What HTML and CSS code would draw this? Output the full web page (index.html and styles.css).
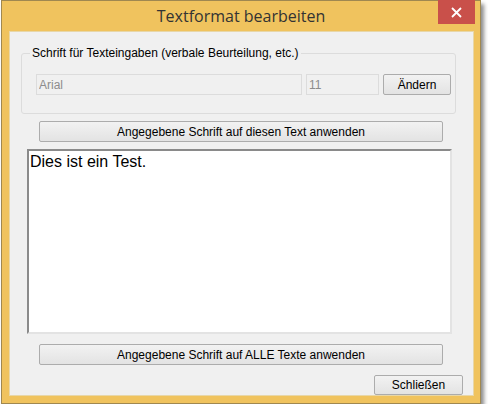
FILE: index.html
```html
<!DOCTYPE html>
<html lang="de">
<head>
    <meta charset="UTF-8">
    <title>Textformat bearbeiten</title>
    <link rel="stylesheet" href="styles.css">
</head>
<body>
    <div class="window">
        <div class="titlebar">
            <span class="title">Textformat bearbeiten</span>
            <button class="close-btn" aria-label="Schließen">
                <svg width="11" height="11" viewBox="0 0 11 11"><path d="M1 1L10 10M10 1L1 10" stroke="#fff" stroke-width="1.8"/></svg>
            </button>
        </div>
        <div class="content">
            <fieldset class="group">
                <legend>Schrift für Texteingaben (verbale Beurteilung, etc.)</legend>
                <div class="font-row">
                    <input type="text" class="font-name" value="Arial" disabled>
                    <input type="text" class="font-size" value="11" disabled>
                    <button class="btn change-btn">Ändern</button>
                </div>
            </fieldset>
            <button class="btn wide-btn first">Angegebene Schrift auf diesen Text anwenden</button>
            <textarea class="editor">Dies ist ein Test.</textarea>
            <button class="btn wide-btn second">Angegebene Schrift auf ALLE Texte anwenden</button>
            <div class="footer">
                <button class="btn close-dlg">Schließen</button>
            </div>
        </div>
    </div>
</body>
</html>
```

FILE: styles.css
```css
body { margin: 0; background: #fff; font-family: "Liberation Sans", Arial, sans-serif; font-size: 12px; color: #000; }
.window { width: 478px; height: 402px; margin-left: 1px; background: #f0c35e; border: 1px solid #a08850; box-shadow: 3px 4px 4px rgba(0,0,0,0.45); display: flex; flex-direction: column; }
.titlebar { height: 32px; display: flex; justify-content: center; align-items: center; position: relative; }
.title { font-family: "Open Sans", "Noto Sans", sans-serif; font-size: 16px; color: #333; margin-top: 0; }
.close-btn { position: absolute; top: -1px; right: 5px; width: 37px; height: 24px; background: #c9504a; border: none; display: flex; align-items: center; justify-content: center; padding: 0; }
.content { flex: 1; margin: 0 6px 7px 7px; background: #f0f0f0; border: 1px solid #e8d7a8; display: flex; flex-direction: column; }

/* Gruppe */
.group { margin: 14px 17px 0 11px; padding: 0 4px 0 14px; border: 1px solid #dcdcdc; border-radius: 3px; height: 68px; box-sizing: border-box; }
.group legend { padding: 0 2px; margin-left: -6px; color: #000; }
.font-row { display: flex; gap: 4px; margin-top: 14px; }
input { font-family: "Liberation Sans", Arial, sans-serif; font-size: 12px; height: 21px; box-sizing: border-box; border: 1px solid #dcdcdc; background: #f0f0f0; color: #8c8c8c; padding: 0 2px; margin: 0; }
.font-name { width: 266px; }
.font-size { width: 73px; }

.btn { font-family: "Liberation Sans", Arial, sans-serif; font-size: 12px; color: #000; border: 1px solid #acacac; background: linear-gradient(#f2f2f2, #e3e3e3); border-radius: 2px; padding: 0; height: 21px; box-sizing: border-box; }
.change-btn { width: 68px; }
.wide-btn { margin-left: 29px; width: 404px; }
.wide-btn.first { margin-top: 7px; }
.wide-btn.second { margin-top: 10px; }
.editor { margin: 7px 21px 0 17px; height: 185px; box-sizing: border-box; resize: none; font-family: "Liberation Sans", Arial, sans-serif; font-size: 16px; color: #000; background: #fff; border: 2px solid; border-color: #8a8a8a #e3e3e3 #e3e3e3 #8a8a8a; padding: 2px 1px; outline: none; }
.footer { display: flex; justify-content: flex-end; padding: 10px 10px 0 0; }
.close-dlg { width: 89px; height: 20px; }
```
